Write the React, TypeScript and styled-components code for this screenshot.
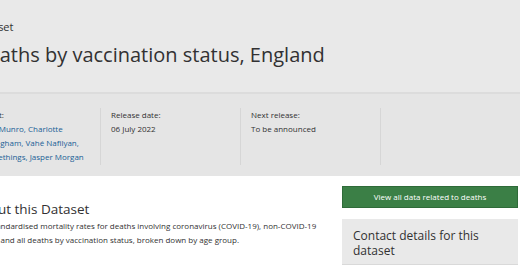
import styled, { createGlobalStyle } from "styled-components";

const GlobalStyle = createGlobalStyle`
  html, body {
    margin: 0;
    padding: 0;
    background: #ffffff;
    overflow: hidden;
  }
  body {
    font-family: "Open Sans", "Liberation Sans", sans-serif;
    color: #323132;
  }
`;

const App = (): JSX.Element => {
  return (
    <Page>
      <GlobalStyle />
      <Header>
        <Wrapper>
          <TypeLabel>Dataset</TypeLabel>
          <Title>Deaths by vaccination status, England</Title>
        </Wrapper>
      </Header>
      <MetaBand>
        <MetaList>
          <MetaItem $first>
            <MetaLabel>Contact:</MetaLabel>
            <MetaLink>
              Daniel Munro, Charlotte Bermingham, Vahé Nafilyan, Katie Sethings, Jasper Morgan
            </MetaLink>
          </MetaItem>
          <MetaItem>
            <MetaLabel>Release date:</MetaLabel>
            <MetaValue>06 July 2022</MetaValue>
          </MetaItem>
          <MetaItem>
            <MetaLabel>Next release:</MetaLabel>
            <MetaValue>To be announced</MetaValue>
          </MetaItem>
          <MetaItem />
        </MetaList>
      </MetaBand>
      <Main>
        <AboutColumn>
          <SectionTitle>About this Dataset</SectionTitle>
          <Summary>
            Age-standardised mortality rates for deaths involving coronavirus
            (COVID-19), non-COVID-19 deaths and all deaths by vaccination status,
            broken down by age group.
          </Summary>
        </AboutColumn>
        <Sidebar>
          <GreenButton>View all data related to deaths</GreenButton>
          <ContactBox>
            <ContactTitle>Contact details for this dataset</ContactTitle>
          </ContactBox>
        </Sidebar>
      </Main>
    </Page>
  );
};

const Page = styled.div`
  width: 520px;
  height: 272px;
  overflow: hidden;
`;
const Header = styled.header`
  background-color: #e9e9e9;
  height: 92px;
`;
const Wrapper = styled.div`
  margin-left: -26px;
  padding-top: 19px;
`;
const TypeLabel = styled.div`
  font-size: 11px;
  line-height: 16px;
`;
const Title = styled.h1`
  margin: 7px 0 0;
  font-size: 20px;
  font-weight: 400;
  line-height: 26px;
`;
const MetaBand = styled.section`
  background-color: #e5e5e5;
  border-top: 2px solid #dcdcdc;
  height: 82px;
`;
const MetaList = styled.ul`
  display: flex;
  list-style: none;
  margin: 0 0 0 -27px;
  padding: 14px 0 0;
`;
const MetaItem = styled.li<{ $first?: boolean }>`
  box-sizing: border-box;
  width: ${(p) => (p.$first ? "127px" : "140px")};
  min-height: 57px;
  padding: ${(p) => (p.$first ? "0 10px 0 0" : "0 10px")};
  border-left: ${(p) => (p.$first ? "none" : "1px solid #d6d6d6")};
  font-size: 8px;
  line-height: 14px;
`;
const MetaLabel = styled.div`
  color: #323132;
`;
const MetaLink = styled.a`
  color: #206095;
  text-decoration: none;
`;
const MetaValue = styled.div`
  color: #323132;
`;
const Main = styled.main`
  display: flex;
  margin-left: -27px;
  padding-top: 10px;
  gap: 10px;
`;
const AboutColumn = styled.div`
  width: 359px;
  flex-shrink: 0;
  padding-top: 14px;
`;
const SectionTitle = styled.h2`
  margin: 0;
  font-size: 13.5px;
  font-weight: 400;
  line-height: 18px;
`;
const Summary = styled.p`
  margin: 1px 0 0;
  font-size: 8px;
  line-height: 14px;
`;
const Sidebar = styled.aside`
  width: 176px;
  flex-shrink: 0;
`;
const GreenButton = styled.div`
  box-sizing: border-box;
  height: 22px;
  background-color: #3b7f46;
  border: 1px solid #2f6b39;
  color: #ffffff;
  font-size: 8px;
  line-height: 20px;
  text-align: center;
`;
const ContactBox = styled.div`
  margin-top: 11px;
  background-color: #e9e9e9;
  padding: 9px 11px 6px;
  border-bottom: 1px solid #d9d9d9;
`;
const ContactTitle = styled.h3`
  margin: 0;
  font-size: 12px;
  font-weight: 400;
  line-height: 15px;
`;

export default App;
